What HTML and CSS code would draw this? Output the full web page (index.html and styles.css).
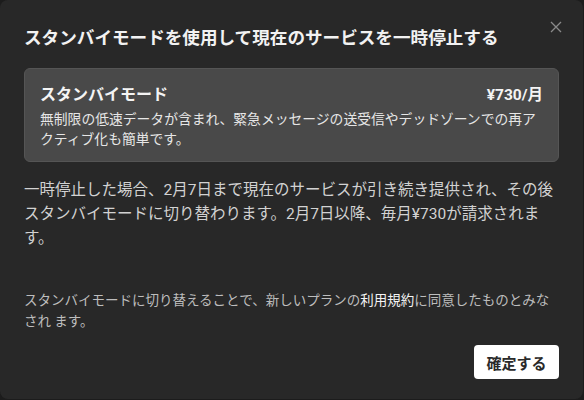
FILE: index.html
```html
<!DOCTYPE html>
<html lang="ja">
<head>
<meta charset="utf-8">
<link rel="stylesheet" href="styles.css">
</head>
<body>
<div class="dialog">
  <button class="close" aria-label="閉じる">
    <svg width="12" height="12" viewBox="0 0 12 12"><path d="M1 1L11 11M11 1L1 11" stroke="#8a8a8a" stroke-width="1.3" fill="none"/></svg>
  </button>
  <h1 class="title">スタンバイモードを使用して現在のサービスを一時停止する</h1>
  <div class="card">
    <div class="card-head">
      <span class="card-title">スタンバイモード</span>
      <span class="card-price">¥730/月</span>
    </div>
    <p class="card-desc">無制限の低速データが含まれ、緊急メッセージの送受信やデッドゾーンでの再アクティブ化も簡単です。</p>
  </div>
  <p class="info">一時停止した場合、2月7日まで現在のサービスが引き続き提供され、その後スタンバイモードに切り替わります。2月7日以降、毎月¥730が請求されます。</p>
  <p class="terms">スタンバイモードに切り替えることで、新しいプランの<a class="link">利用規約</a>に同意したものとみな<br>され ます。</p>
  <div class="actions">
    <button class="confirm">確定する</button>
  </div>
</div>
</body>
</html>
```

FILE: styles.css
```css
html, body {
  margin: 0;
  padding: 0;
  background: #1c1c1c;
}
body {
  width: 584px;
  height: 400px;
  overflow: hidden;
  font-family: "Roboto", "Noto Sans CJK JP", sans-serif;
}
.dialog {
  position: relative;
  box-sizing: border-box;
  width: 583px;
  height: 399px;
  background: #282828;
  border-radius: 8px;
  padding: 26px 24px 0 24px;
  display: flex;
  flex-direction: column;
}
.close {
  position: absolute;
  top: 20px;
  right: 20px;
  width: 14px;
  height: 14px;
  padding: 0;
  margin: 0;
  border: 0;
  background: transparent;
  display: flex;
  align-items: center;
  justify-content: center;
}
.title {
  margin: 0;
  font-size: 17.6px;
  line-height: 25px;
  font-weight: 700;
  color: #f2f2f2;
}
.card {
  margin-top: 17px;
  background: #494949;
  border: 1px solid #555;
  border-radius: 6px;
  padding: 13px 15px 12px 15px;
}
.card-head {
  display: flex;
  justify-content: space-between;
  align-items: center;
  height: 22px;
}
.card-title {
  font-size: 16px;
  font-weight: 700;
  color: #f4f4f4;
}
.card-price {
  font-size: 15.5px;
  font-weight: 700;
  color: #f4f4f4;
}
.card-desc {
  margin: 5px 0 0 0;
  font-size: 13.8px;
  line-height: 20px;
  color: #e6e6e6;
}
.info {
  margin: 16px 0 0 0;
  font-size: 15.5px;
  line-height: 24px;
  color: #d2d2d2;
}
.terms {
  margin: 40px 0 0 0;
  font-size: 13.5px;
  line-height: 21px;
  color: #bdbdbd;
}
.link {
  color: #f4f4f4;
}
.actions {
  display: flex;
  justify-content: flex-end;
  margin-top: 13px;
}
.confirm {
  width: 85px;
  height: 34px;
  border: 0;
  border-radius: 4px;
  background: #ffffff;
  color: #2a2a2a;
  font-family: "Roboto", "Noto Sans CJK JP", sans-serif;
  font-size: 15px;
  font-weight: 700;
}
```
